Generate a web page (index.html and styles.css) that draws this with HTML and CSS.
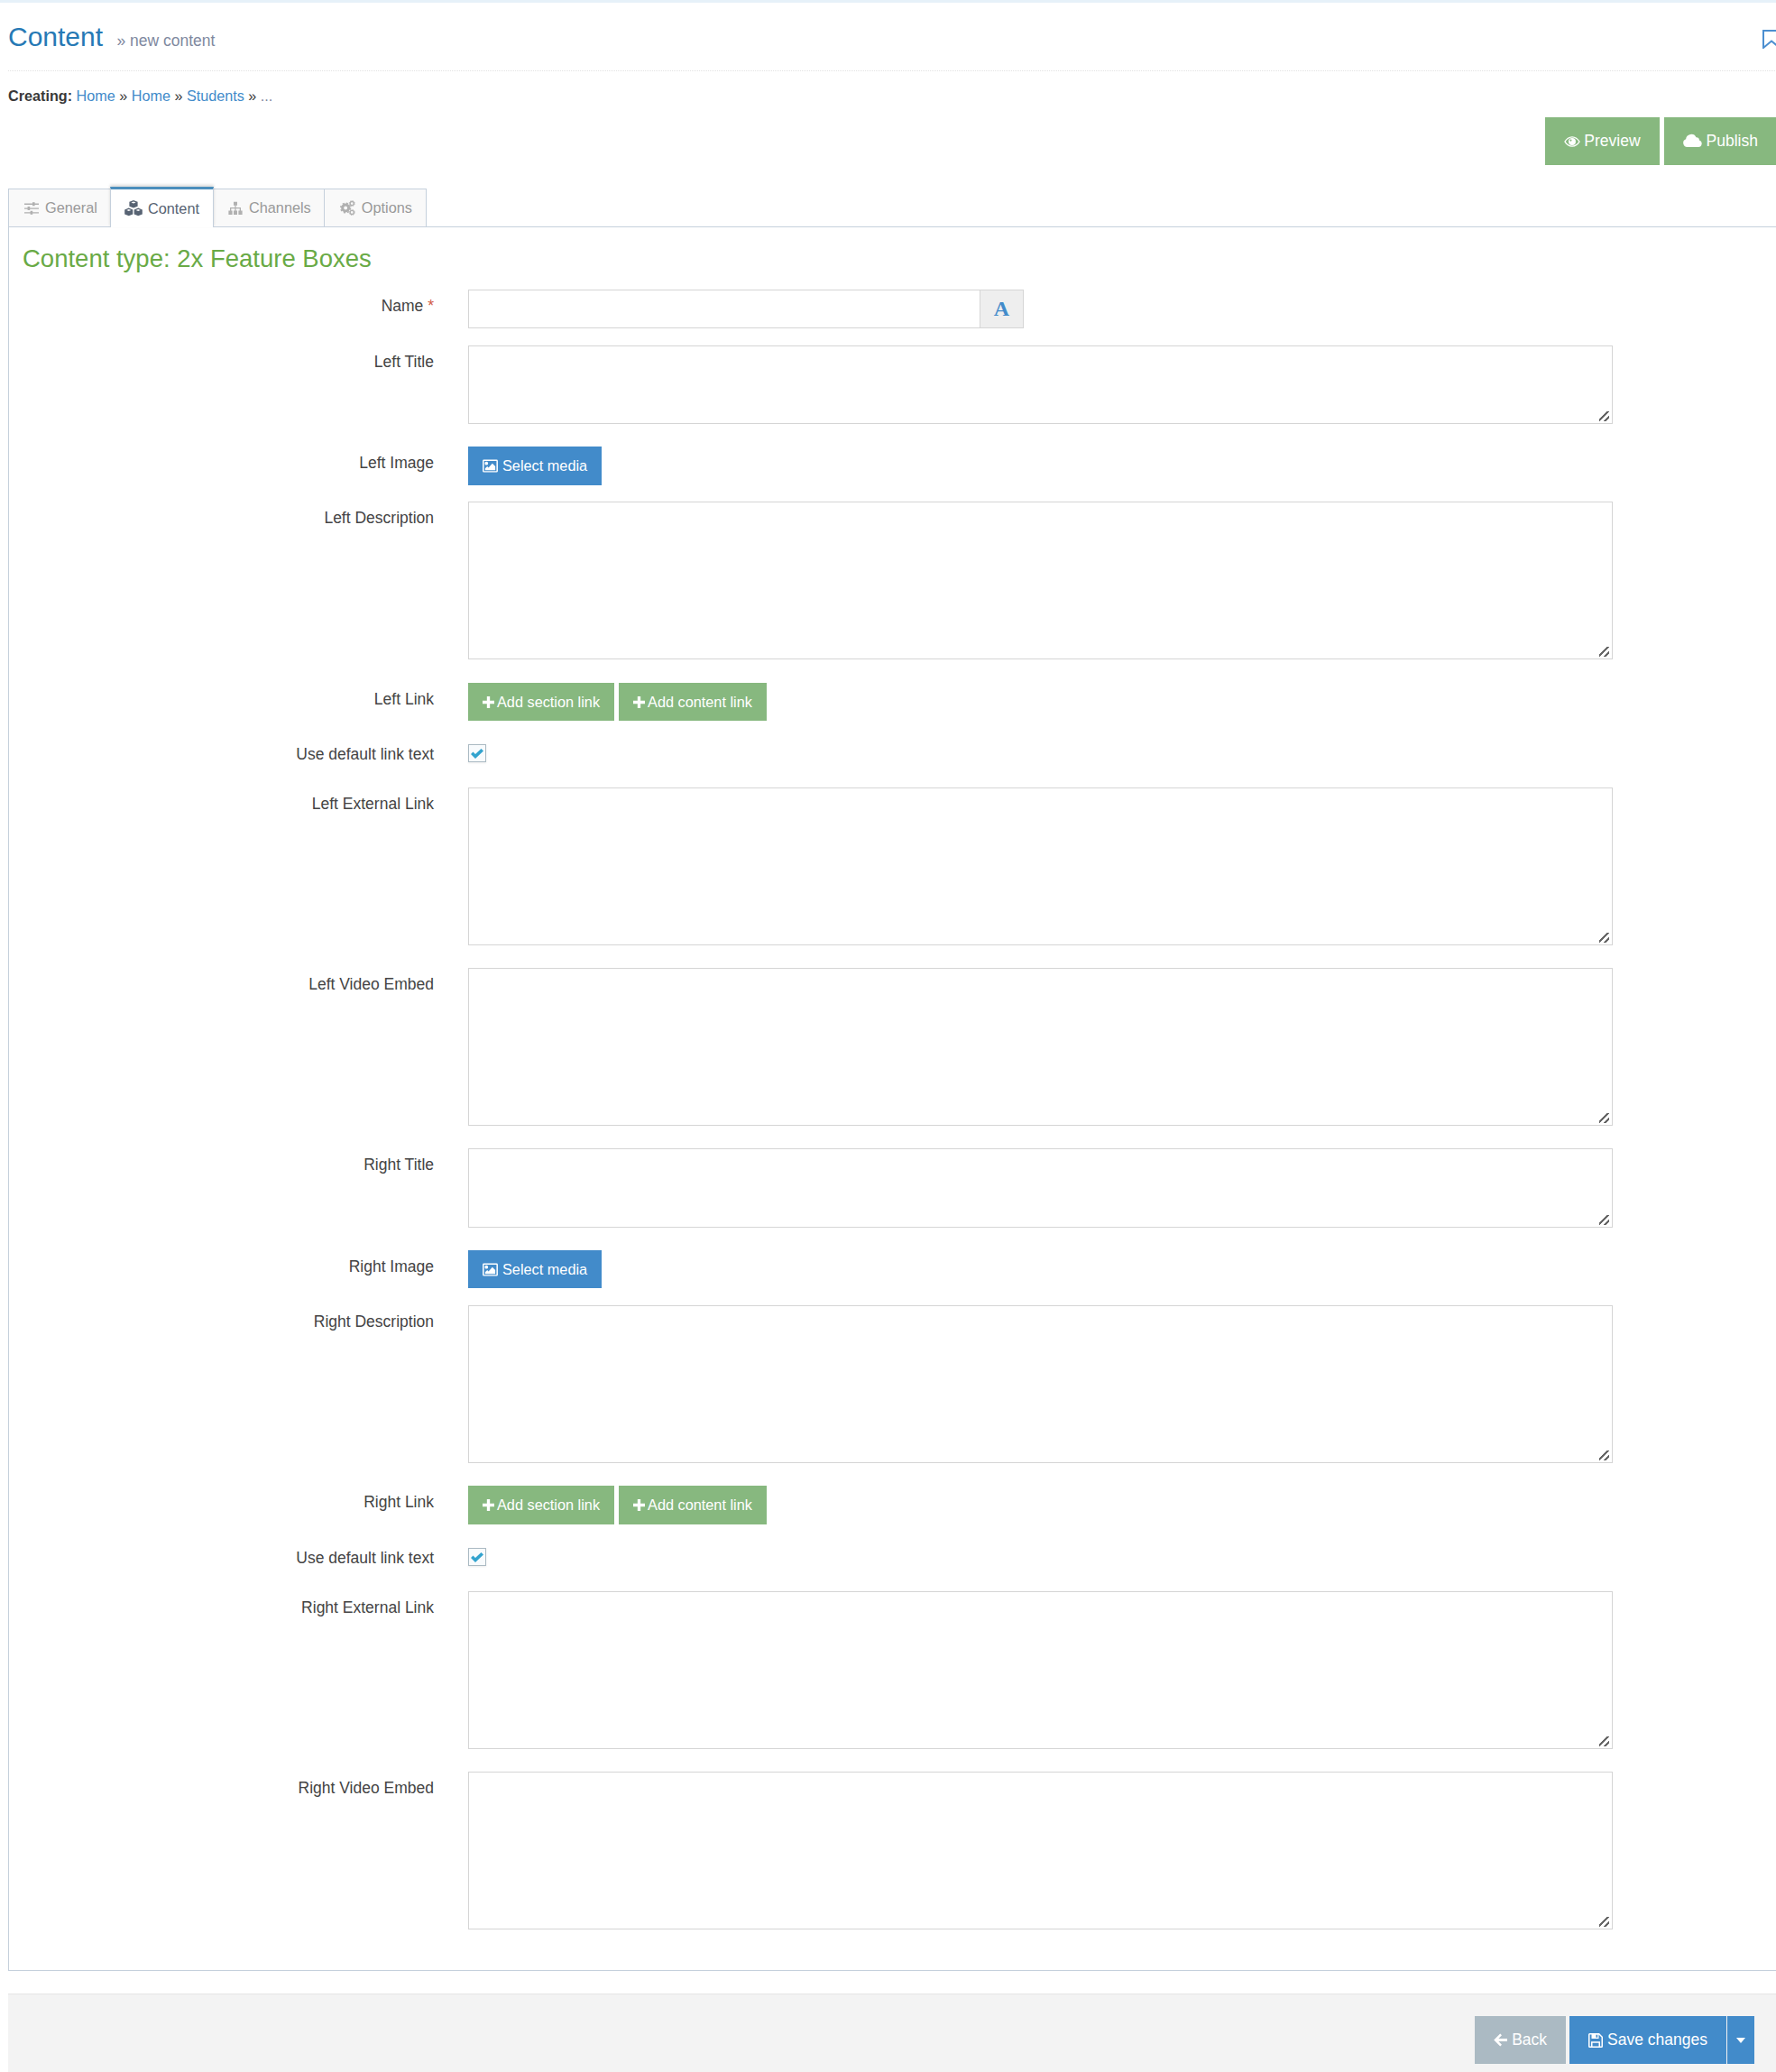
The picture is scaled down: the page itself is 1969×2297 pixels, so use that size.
FILE: index.html
```html
<!DOCTYPE html>
<html lang="en">
<head>
<meta charset="utf-8">
<title>Content - new content</title>
<link rel="stylesheet" href="styles.css">
</head>
<body>
<svg class="sprite" width="0" height="0" aria-hidden="true">
  <symbol id="i-sliders" viewBox="0 0 16 16"><path d="M0 2.6h16v1.3H0zM0 7.4h16v1.3H0zM0 12.2h16v1.3H0z"/><rect x="9" y="1.2" width="2.6" height="4"/><rect x="3.6" y="6" width="2.6" height="4"/><rect x="6.6" y="10.8" width="2.6" height="4"/></symbol>
  <symbol id="i-cubes" viewBox="0 0 20 18"><path d="M10 0l4.6 1.8v4.9L10 8.6 5.400 6.700V1.800zM10 1.400L7.500 2.400 10 3.400l2.500-1zM4.800 8.600l4.500 1.800v5L4.800 17.300.2 15.400v-5zM4.800 10L2.300 11l2.500 1 2.500-1zM15.200 8.600l4.600 1.800v5l-4.600 1.900-4.500-1.900v-5zM15.200 10l-2.500 1 2.500 1 2.500-1z"/></symbol>
  <symbol id="i-sitemap" viewBox="0 0 16 16"><path d="M6 .8h4v4H8.600V7H14v3.600h1.600V15H11.400v-4.400h1.300V8.300H8.600v2.300H10V15H6v-4.400h1.400V8.300H3.300v2.300h1.300V15H.4v-4.400H2V7h5.400V4.800H6z"/></symbol>
  <symbol id="i-cogs" viewBox="0 0 18 18"><circle cx="6.500" cy="9" r="3.700" fill="none" stroke="currentColor" stroke-width="3.200"/><circle cx="6.500" cy="9" r="5.700" fill="none" stroke="currentColor" stroke-width="1.500" stroke-dasharray="2.200 2.280"/><circle cx="14" cy="3.800" r="2.200" fill="none" stroke="currentColor" stroke-width="1.500"/><circle cx="14" cy="3.800" r="3.300" fill="none" stroke="currentColor" stroke-width=".9" stroke-dasharray="1.300 1.290"/><circle cx="14" cy="14.200" r="2.200" fill="none" stroke="currentColor" stroke-width="1.500"/><circle cx="14" cy="14.200" r="3.300" fill="none" stroke="currentColor" stroke-width=".9" stroke-dasharray="1.300 1.290"/></symbol>
  <symbol id="i-eye" viewBox="0 0 20 14"><path fill-rule="evenodd" d="M10 .5c4 0 7.500 2.400 9.800 6.500C17.500 11.100 14 13.500 10 13.500S2.500 11.100.2 7C2.500 2.900 6 .5 10 .5zM10 2C6.800 2 4 3.800 1.900 7 4 10.200 6.800 12 10 12s6-1.800 8.100-5C16 3.800 13.200 2 10 2zm0 .6a4.400 4.400 0 1 1 0 8.800 4.400 4.400 0 0 1 0-8.800zM8.300 4.200a1.200 1.200 0 1 0 0 2.400 1.200 1.200 0 0 0 0-2.400z"/></symbol>
  <symbol id="i-cloud" viewBox="0 0 21 15"><path d="M4.600 15A4.500 4.500 0 0 1 3.100 6.300 6 6 0 0 1 14.500 4.300 3.400 3.400 0 0 1 18 7.400 3.900 3.900 0 0 1 16.700 15z"/></symbol>
  <symbol id="i-picture" viewBox="0 0 18 16"><path fill-rule="evenodd" d="M1.500 .5h15A1.500 1.500 0 0 1 18 2v12a1.500 1.500 0 0 1-1.500 1.500h-15A1.500 1.500 0 0 1 0 14V2A1.500 1.500 0 0 1 1.500 .5zM1.600 2v12h14.800V2zM4.500 3a2 2 0 1 1 0 4 2 2 0 0 1 0-4zM3 13v-2l2.500-2.500 1.500 1.500 4.500-5L15 8.500V13z"/></symbol>
  <symbol id="i-plus" viewBox="0 0 14 14"><path d="M5.200 0h3.600v5.200H14v3.600H8.800V14H5.200V8.800H0V5.200h5.200z"/></symbol>
  <symbol id="i-back" viewBox="0 0 16 15"><path d="M7.700 0l1.900 1.900L5.700 5.800H16v3.400H5.700l3.900 3.900L7.700 15 .2 7.500z"/></symbol>
  <symbol id="i-save" viewBox="0 0 16 16"><path fill-rule="evenodd" d="M1.500 0H12l4 4v10.500a1.500 1.500 0 0 1-1.500 1.500h-13A1.500 1.500 0 0 1 0 14.500v-13A1.500 1.500 0 0 1 1.500 0zM1.500 1.500v13H3V9.200h10v5.300h1.500V4.600L11.500 1.600V6H3.500V1.500zM4.500 10.700v3.800h7v-3.800zM8.500 1.800v3h1.700v-3z"/></symbol>
  <symbol id="i-check" viewBox="0 0 14 11"><path d="M5 11L0 6l2.500-2.500L5 6l6.500-6L14 2.500z"/></symbol>
</svg>

<div class="page">
  <header class="page-header">
    <h1 class="page-title">Content <small class="page-sub">» new content</small></h1>
    <svg class="bookmark" viewBox="0 0 20 21" aria-hidden="true"><path d="M1 1h18v19l-9-7.500L1 20z"/></svg>
  </header>

  <p class="crumbs"><b>Creating:</b> <a href="#">Home</a> » <a href="#">Home</a> » <a href="#">Students</a> » <span class="crumb-more">...</span></p>

  <div class="actions">
    <button class="btn btn-green btn-lg" type="button"><svg class="ic ic-eye"><use href="#i-eye"/></svg>Preview</button>
    <button class="btn btn-green btn-lg" type="button"><svg class="ic ic-cloud"><use href="#i-cloud"/></svg>Publish</button>
  </div>

  <nav class="tabs">
    <a class="tab tab-first" href="#"><svg class="tab-ic"><use href="#i-sliders"/></svg>General</a>
    <a class="tab tab-active" href="#"><svg class="tab-ic tab-ic-cubes"><use href="#i-cubes"/></svg>Content</a>
    <a class="tab tab-mid" href="#"><svg class="tab-ic"><use href="#i-sitemap"/></svg>Channels</a>
    <a class="tab tab-last" href="#"><svg class="tab-ic tab-ic-cogs"><use href="#i-cogs"/></svg>Options</a>
  </nav>

  <main class="panel">
    <h2 class="type-title">Content type: 2x Feature Boxes</h2>
    <form class="form">
      <div class="row row-input">
        <label class="lbl">Name <span class="req">*</span></label>
        <div class="input-group"><input class="text" type="text"><span class="addon">A</span></div>
      </div>
      <div class="row row-area"><label class="lbl">Left Title</label><div class="area-wrap"><textarea class="area area-sm"></textarea></div></div>
      <div class="row row-media"><label class="lbl">Left Image</label><div class="btns"><button class="btn btn-blue" type="button"><svg class="ic ic-pic"><use href="#i-picture"/></svg>Select media</button></div></div>
      <div class="row row-area row-area-wide"><label class="lbl">Left Description</label><div class="area-wrap"><textarea class="area area-lg"></textarea></div></div>
      <div class="row row-link row-link-short"><label class="lbl">Left Link</label><div class="btns"><button class="btn btn-green" type="button"><svg class="ic ic-plus"><use href="#i-plus"/></svg>Add section link</button><button class="btn btn-green" type="button"><svg class="ic ic-plus"><use href="#i-plus"/></svg>Add content link</button></div></div>
      <div class="row row-check"><label class="lbl lbl-check">Use default link text</label><span class="check"><svg class="check-mark"><use href="#i-check"/></svg></span></div>
      <div class="row row-area"><label class="lbl">Left External Link</label><div class="area-wrap"><textarea class="area area-lg"></textarea></div></div>
      <div class="row row-area"><label class="lbl">Left Video Embed</label><div class="area-wrap"><textarea class="area area-lg"></textarea></div></div>
      <div class="row row-area"><label class="lbl">Right Title</label><div class="area-wrap"><textarea class="area area-sm area-sm-tall"></textarea></div></div>
      <div class="row row-media row-media-short"><label class="lbl">Right Image</label><div class="btns"><button class="btn btn-blue" type="button"><svg class="ic ic-pic"><use href="#i-picture"/></svg>Select media</button></div></div>
      <div class="row row-area"><label class="lbl">Right Description</label><div class="area-wrap"><textarea class="area area-lg"></textarea></div></div>
      <div class="row row-link"><label class="lbl">Right Link</label><div class="btns"><button class="btn btn-green" type="button"><svg class="ic ic-plus"><use href="#i-plus"/></svg>Add section link</button><button class="btn btn-green" type="button"><svg class="ic ic-plus"><use href="#i-plus"/></svg>Add content link</button></div></div>
      <div class="row row-check"><label class="lbl lbl-check">Use default link text</label><span class="check"><svg class="check-mark"><use href="#i-check"/></svg></span></div>
      <div class="row row-area"><label class="lbl">Right External Link</label><div class="area-wrap"><textarea class="area area-lg"></textarea></div></div>
      <div class="row"><label class="lbl">Right Video Embed</label><div class="area-wrap"><textarea class="area area-lg"></textarea></div></div>
    </form>
  </main>

  <footer class="form-actions">
    <button class="btn btn-grey btn-lg" type="button"><svg class="ic ic-back"><use href="#i-back"/></svg>Back</button>
    <div class="split">
      <button class="btn btn-blue btn-lg" type="button"><svg class="ic ic-save"><use href="#i-save"/></svg>Save changes</button>
      <button class="btn btn-blue btn-caret" type="button" aria-label="More"><span class="caret"></span></button>
    </div>
  </footer>
</div>
</body>
</html>
```
FILE: styles.css
```css
* { box-sizing: border-box; }
html, body { margin: 0; padding: 0; overflow-x: hidden; background: #fff; }
body {
  font-family: "Liberation Sans", Arial, sans-serif;
  font-size: 17.5px;
  color: #444;
  border-top: 3px solid #e6f1f9;
}
.sprite { position: absolute; }
.page { width: 1970px; padding-left: 9px; }

.page-header {
  display: flex;
  justify-content: space-between;
  align-items: flex-start;
  height: 76px;
  border-bottom: 1px dotted #e2e2e2;
}
.page-title {
  margin: 18px 0 0;
  font-size: 30px;
  line-height: 40px;
  font-weight: 400;
  color: #2679b5;
  white-space: pre-wrap;
}
.page-sub { margin-left: 7px; font-size: 17.5px; color: #8089a0; }
.bookmark { width: 20px; height: 21px; margin: 30px -4px 0 0; fill: none; stroke: #4c8fd0; stroke-width: 2; }

.crumbs { margin: 0; padding-top: 16px; height: 51px; font-size: 16.2px; line-height: 22px; color: #393939; }
.crumbs a { color: #428bca; text-decoration: none; }
.crumb-more { color: #8089a0; }

.actions { display: flex; justify-content: flex-end; gap: 5px; height: 77px; }

.btn {
  display: inline-flex;
  align-items: center;
  justify-content: center;
  border: 0;
  margin: 0;
  color: #fff;
  font-family: inherit;
  font-size: 16.3px;
  padding: 0 16px;
  height: 43px;
}
.btn-lg { font-size: 17.5px; height: 53px; padding: 0 21px; }
.btn-green { background: #87b87f; }
.btn-blue { background: #428bca; }
.btn-grey { background: #abbac3; }
.ic { fill: currentColor; flex: none; margin-right: 3px; }
.ic-eye { width: 18px; height: 14px; margin-right: 4px; }
.ic-cloud { width: 21px; height: 15px; margin: -3px 5px 0 0; }
.ic-pic { width: 17px; height: 15px; margin-right: 5px; }
.ic-plus { width: 13px; height: 13px; margin-right: 3px; }
.ic-back { width: 15px; height: 15px; margin-right: 5px; }
.ic-save { width: 16px; height: 16px; margin-right: 5px; }

.tabs { display: flex; align-items: flex-end; height: 44px; position: relative; z-index: 1; }
.tab {
  display: flex;
  align-items: center;
  height: 43px;
  padding: 0 15px 0 16px;
  margin-right: -1px;
  margin-bottom: -1px;
  border: 1px solid #c5d0dc;
  background: #f9f9f9;
  color: #999;
  font-size: 16.3px;
  text-decoration: none;
}
.tab-first { padding: 0 14px 0 17px; }
.tab-mid { padding-right: 14px; }
.tab-last { padding: 0 15px 0 17px; }
.tab-active {
  height: 45px;
  padding-left: 15px;
  border-top: 3px solid #4c8fbd;
  border-bottom: 0;
  background: #fff;
  color: #576373;
  z-index: 1;
  box-shadow: 0 -2px 3px rgba(0, 0, 0, .15);
}
.tab-ic { width: 16px; height: 16px; margin-right: 7px; fill: currentColor; color: #b0b0b0; }
.tab-active .tab-ic { color: #576373; }
.tab-ic-cubes { width: 20px; height: 18px; margin-right: 6px; }
.tab-ic-cogs { width: 17px; height: 17px; margin-right: 7px; }

.panel {
  border: 1px solid #c5d0dc;
  border-right: 0;
  padding: 0 0 45px 15px;
}
.type-title {
  margin: 0;
  padding-top: 17px;
  height: 69px;
  font-size: 27.5px;
  line-height: 36px;
  font-weight: 400;
  color: #69aa46;
}

.row { display: grid; grid-template-columns: 456px auto; column-gap: 38px; justify-content: start; }
.row-input { margin-bottom: 19px; }
.row-area { margin-bottom: 25px; }
.row-area-wide { margin-bottom: 26px; }
.row-media { margin-bottom: 18px; }
.row-media-short { margin-bottom: 19px; }
.row-media-short .btn { height: 42px; }
.row-link { margin-bottom: 26px; }
.row-link-short .btn { height: 42px; }
.row-check { margin-bottom: 28px; grid-template-rows: 20px; }
.lbl { text-align: right; padding-top: 6px; line-height: 24px; color: #444; }
.lbl-check { padding-top: 0; margin-top: -1px; }
.req { color: #d15b47; }

.input-group { display: flex; width: 616px; height: 43px; }
.text { flex: 1; min-width: 0; height: 100%; border: 1px solid #d5d5d5; border-right: 0; outline: 0; padding: 0 8px; }
.addon {
  display: flex;
  align-items: center;
  justify-content: center;
  width: 49px;
  background: #eee;
  border: 1px solid #d5d5d5;
  color: #428bca;
  font: bold 24px "Liberation Serif", "Times New Roman", serif;
}
.area-wrap { position: relative; width: 1269px; }
.area-wrap::after {
  content: "";
  position: absolute;
  right: 4px;
  bottom: 3px;
  width: 11px;
  height: 11px;
  pointer-events: none;
  background: linear-gradient(135deg, transparent 38%, #666 38%, #666 52%, transparent 52%, transparent 70%, #666 70%, #666 84%, transparent 84%);
}
.area { display: block; width: 100%; border: 1px solid #d5d5d5; outline: 0; padding: 5px 9px; margin: 0; background: #fff; font: inherit; resize: none; }
.area-sm { height: 87px; }
.area-sm-tall { height: 88px; }
.area-lg { height: 175px; }

.btns { display: flex; gap: 5px; }

.check {
  display: flex;
  align-items: center;
  justify-content: center;
  width: 20px;
  height: 20px;
  background: #f8fbfd;
  border: 1px solid #abbac3;
  box-shadow: 0 1px 2px rgba(0, 0, 0, .08);
}
.check-mark { width: 14px; height: 11px; fill: #32a3ce; }

.form-actions {
  display: flex;
  justify-content: flex-end;
  gap: 4px;
  margin-top: 25px;
  padding: 24px 25px 9px 0;
  background: #f3f3f3;
  border-top: 1px solid #e5e5e5;
}
.split { display: flex; gap: 1px; }
.btn-caret { width: 30px; height: 53px; padding: 0; }
.caret { width: 0; height: 0; border-style: solid; border-width: 6px 5.500px 0; border-color: #fff transparent transparent; }
```
